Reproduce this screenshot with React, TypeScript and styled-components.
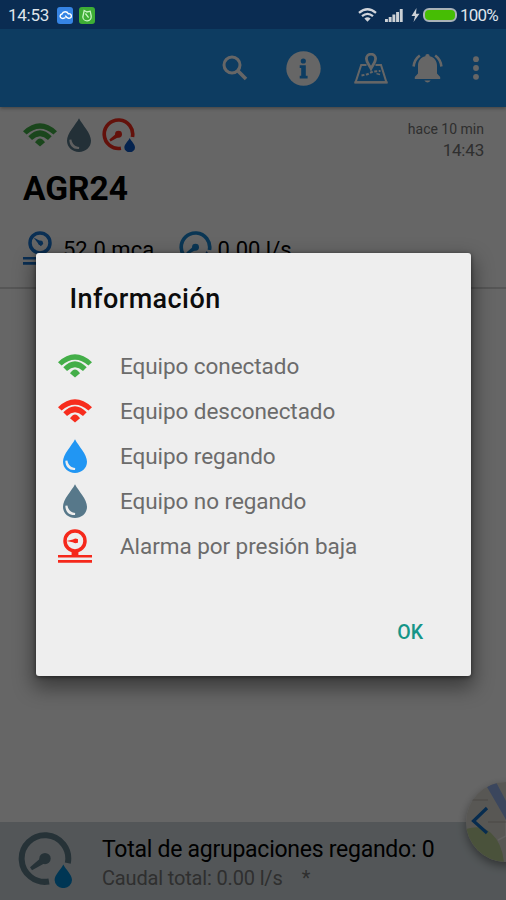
import React from "react";
import styled, { createGlobalStyle } from "styled-components";

const GlobalStyle = createGlobalStyle`
  * { box-sizing: border-box; }
  body { margin: 0; background: #666; font-family: Roboto, sans-serif; }
  svg { display: block; flex: none; }
`;

const Screen = styled.div`
  position: relative;
  display: flex;
  flex-direction: column;
  width: 506px;
  height: 900px;
  overflow: hidden;
  background: #fff;
`;

const StatusBar = styled.header`
  position: relative;
  z-index: 2;
  flex: none;
  display: flex;
  align-items: center;
  height: 29px;
  padding: 1px 8px 0;
  background: #0a2c52;
  color: #dfe4ea;
  font-size: 17px;
  line-height: 28px;
`;

const Clock = styled.span`
  width: 49px;
  letter-spacing: -0.25px;
`;

const Badge = styled.span<{ $color: string }>`
  display: flex;
  align-items: center;
  justify-content: center;
  width: 16px;
  height: 17px;
  margin-right: 6px;
  border-radius: 3px;
  background: ${(p) => p.$color};
`;

const StatusRight = styled.div`
  display: flex;
  align-items: center;
  margin-left: auto;
`;

const Charge = styled.span`
  width: 34px;
  height: 14px;
  margin: 0 3px 0 3px;
  border: 2px solid #a9b2b8;
  border-radius: 6px;
  background: #46bd04;
`;

const Percent = styled.span`
  width: 38px;
  letter-spacing: -0.8px;
`;

const Toolbar = styled.nav`
  flex: none;
  display: flex;
  align-items: center;
  justify-content: flex-end;
  height: 78px;
  padding-right: 26px;
  background: #2196f3;
  color: #fff;
  box-shadow: 0 1px 4px rgba(0, 0, 0, 0.4);
`;

const Action = styled.span<{ $gap: number }>`
  margin-left: ${(p) => p.$gap}px;
`;

const Card = styled.section`
  flex: none;
  display: flex;
  justify-content: space-between;
  height: 182px;
  padding: 11px 22px 0 23px;
  border-bottom: 2px solid #d6d6d6;
`;

const Badges = styled.div`
  display: flex;
  align-items: flex-start;
  height: 36px;
`;

const Name = styled.h1`
  margin: 15px 0 0;
  font-size: 33.5px;
  line-height: 40px;
  font-weight: 700;
`;

const Readings = styled.div`
  display: flex;
  align-items: flex-start;
  margin-top: 22px;
  font-size: 22px;
  line-height: 37px;
`;

const Reading = styled.span<{ $width: number }>`
  width: ${(p) => p.$width}px;
  padding-left: 6px;
  white-space: nowrap;
`;

const Times = styled.div`
  color: #757575;
  text-align: right;
  font-size: 14px;
  line-height: 22px;
`;

const Hour = styled.div`
  font-size: 17px;
  line-height: 21px;
  letter-spacing: -0.2px;
`;

const Summary = styled.footer`
  flex: none;
  display: flex;
  height: 78px;
  margin-top: auto;
  padding: 10px 18px;
  background: #cfd8dc;
`;

const SummaryText = styled.div`
  padding: 4px 0 0 30px;
  white-space: nowrap;
`;

const Total = styled.div`
  font-size: 23px;
  line-height: 27px;
  letter-spacing: -0.26px;
`;

const Flow = styled.div`
  margin-top: 2px;
  color: #757575;
  font-size: 20px;
  line-height: 26px;
  letter-spacing: -0.16px;
  white-space: pre;
`;

const MapHandle = styled.div`
  position: absolute;
  top: 782px;
  left: 466px;
  width: 80px;
  height: 80px;
  overflow: hidden;
  border-radius: 50%;
  box-shadow: 0 4px 10px rgba(0, 0, 0, 0.4);
`;

const Scrim = styled.div`
  position: absolute;
  inset: 0;
  z-index: 1;
  padding: 253px 35px 0 36px;
  background: rgba(0, 0, 0, 0.6);
`;

const Dialog = styled.div`
  display: flex;
  flex-direction: column;
  height: 423px;
  padding: 29px 48px 0 22px;
  border-radius: 3px;
  background: #eee;
  box-shadow: 0 9px 20px 3px rgba(0, 0, 0, 0.42), 0 1px 4px rgba(0, 0, 0, 0.5);
`;

const Title = styled.h2`
  margin: 0 0 27px 11.5px;
  font-size: 27px;
  line-height: 34px;
  font-weight: 500;
  letter-spacing: 0.42px;
  color: #0c0c0c;
`;

const Row = styled.div`
  display: flex;
  align-items: center;
  height: 45px;
  color: #6b6b6b;
  font-size: 22.5px;
`;

const Label = styled.span`
  margin-left: 28px;
  white-space: nowrap;
  letter-spacing: -0.06px;
`;

const Confirm = styled.button`
  align-self: flex-end;
  margin: 52px 0 0;
  padding: 0;
  border: 0;
  background: none;
  color: #159588;
  font: 500 19.5px/25px Roboto, sans-serif;
`;

const Wifi = ({ color }: { color: string }) => (
  <svg width="34" height="34" viewBox="0 0 34 34" fill={color}>
    <path d="M0 13.2Q17 -2.6 34 13.2L30.4 16.6Q17 4.8 3.6 16.6Z" />
    <path d="M5.3 18.3Q17 6.3 28.7 18.3L25 21.9Q17 14.6 9 21.9Z" />
    <path d="M12 24.2Q17 16.6 22 24.2L17 28.6Z" />
  </svg>
);

const Drop = ({ color }: { color: string }) => (
  <svg width="34" height="34" viewBox="0 0 34 34">
    <path d="M17 .3C20.5 7.2 29 15.2 29 22.8C29 29.2 23.8 34 17 34S5 29.2 5 22.8C5 15.2 13.5 7.2 17 .3Z" fill={color} />
    <path d="M7.3 21.8C7.5 28 11.4 31.6 17 31L17.2 28.9C13 28.6 10.2 26 9.4 21.4Z" fill="#eee" />
  </svg>
);

/* Flow gauge with a water drop over its open lower-right corner. */
const Dial = ({ size, color, drop }: { size: number; color: string; drop: string }) => (
  <svg width={size} height={size * 1.04} viewBox="0 0 54 56">
    <path d="M31 49.4A23.3 23.3 0 1 1 49.8 31" fill="none" stroke={color} strokeWidth="6" />
    <path d="M12 35.2L14 38.2L28 30.5L24.5 24.5Z" fill={color} />
    <circle cx="27" cy="26.5" r="5.7" fill={color} />
    <path d="M45.3 32.5C48 38 54 42.5 54 48A8.7 8 0 0 1 36.6 48C36.6 42.5 42.8 38 45.3 32.5Z" fill={drop} />
  </svg>
);

const Manometer = ({ color, tilt = 0 }: { color: string; tilt?: number }) => (
  <svg width="34" height="34" viewBox="0 0 34 34">
    <circle cx="17" cy="11.9" r="10" fill="none" stroke={color} strokeWidth="3.5" />
    <path d="M8.6 11.9L17 10H19.8V13.8H17Z" fill={color} transform={`rotate(${tilt} 17 11.9)`} />
    <circle cx="17.6" cy="11.9" r="2.4" fill={color} />
    <path d="M13.6 22H20.4V27H13.6ZM0 26H34V28.6H0ZM0 31.1H34V33.7H0Z" fill={color} />
  </svg>
);

const SearchIcon = () => (
  <svg width="26" height="26" viewBox="0 0 26 26" fill="none" stroke="currentColor">
    <circle cx="10" cy="10" r="8" strokeWidth="3" />
    <path d="M15.8 15.8L24 24" strokeWidth="3.6" />
  </svg>
);

const InfoIcon = () => (
  <svg width="35" height="35" viewBox="0 0 35 35">
    <circle cx="17.5" cy="17.5" r="17.2" fill="currentColor" />
    <g fill="#2196f3">
      <circle cx="17.3" cy="10" r="2.6" />
      <path d="M13.7 14.3H19.8V24.8H21.6V27.4H13.7V24.8H15.2V16.9H13.7Z" />
    </g>
  </svg>
);

const MapIcon = () => (
  <svg width="34" height="31" viewBox="0 0 34 31" fill="none" stroke="currentColor" strokeWidth="2">
    <path d="M12.5 12H7.2L1.6 29.3H32.4L27 12H21.5" />
    <path d="M.5 29.4H33.5" strokeWidth="2.4" />
    <path d="M17 15.5C15.5 12 12.4 9.4 12.4 5.8A4.6 4.6 0 0 1 21.6 5.8C21.6 9.4 18.5 12 17 15.5Z" strokeWidth="2.8" />
    <path d="M7.5 22.5L13.5 21.2L19 18.5L26.5 18" strokeDasharray="3 1.5" />
    <path d="M22.5 20.6L26 21.5" strokeWidth="1.3" />
  </svg>
);

const BellIcon = () => (
  <svg width="32" height="31" viewBox="0 0 32 31" fill="currentColor">
    <path d="M15.5 1A2.2 2.2 0 0 1 17.7 3.2C22.5 4.3 25 8 25 12.8V20.5L28.2 24V26H2.8V24L6 20.5V12.8C6 8 8.5 4.3 13.3 3.2A2.2 2.2 0 0 1 15.5 1ZM12.3 27.4H18.7Q15.5 31.5 12.3 27.4Z" />
    <path d="M7.8 2.5Q2.4 6.4 1.6 13.5M23.2 2.5Q28.6 6.4 29.4 13.5" fill="none" stroke="currentColor" strokeWidth="2.6" />
  </svg>
);

const MoreIcon = () => (
  <svg width="8" height="24" viewBox="0 0 8 24" fill="currentColor">
    <circle cx="4" cy="3.2" r="2.9" />
    <circle cx="4" cy="12" r="2.9" />
    <circle cx="4" cy="20.8" r="2.9" />
  </svg>
);

const CloudIcon = () => (
  <svg width="13" height="9" viewBox="0 0 13 9" fill="none" stroke="#fff" strokeWidth="1.4">
    <path d="M6.5 6.5Q4.5 8 2.5 7.2A2.2 2.2 0 0 1 3 3A3.4 3.4 0 0 1 9.3 2.8A2.3 2.3 0 1 1 9.5 7.2Q7.7 7 6.3 4.6" />
  </svg>
);

const TagIcon = () => (
  <svg width="12" height="13" viewBox="0 0 12 13" fill="none" stroke="#c8f5c5" strokeWidth="1.3">
    <path d="M3.2 1.5L6 3L9.2 2.2L10.2 7.2A4.2 4.2 0 0 1 1.8 8Z" />
    <path d="M4.4 4.5L7.6 8.7" />
  </svg>
);

const StatusWifi = () => (
  <svg width="19" height="14" viewBox="0 0 19 14" fill="none" stroke="#d1d5db" strokeWidth="2.3">
    <path d="M1 4.8Q9.5 -2.2 18 4.8M4 8.2Q9.5 3.6 15 8.2" />
    <path d="M6.4 10.5Q9.5 8 12.6 10.5L9.5 13.7Z" fill="#d1d5db" stroke="none" />
  </svg>
);

const Signal = () => (
  <svg width="18" height="13" viewBox="0 0 18 13" fill="#ccd1d6">
    <path d="M0 10H2.9V13H0ZM3.7 8H6.6V13H3.7ZM7.4 5.5H10.3V13H7.4ZM11.1 3H14V13H11.1ZM14.8 0H17.7V13H14.8Z" />
  </svg>
);

const Bolt = () => (
  <svg width="9" height="14" viewBox="0 0 9 14" fill="#ccd1d6">
    <path d="M5.5 0L.5 8H4L2.5 14L8.5 5.7H5Z" />
  </svg>
);

const MapArt = () => (
  <svg width="80" height="80" viewBox="0 0 80 80">
    <rect width="80" height="80" fill="#dcd9d2" />
    <path d="M0 47Q16 42 25 51Q36 61 38 80H0Z" fill="#b9cc93" />
    <path d="M22 0L40 31V54L32 58" fill="none" stroke="#f4f2ee" strokeWidth="1.5" />
    <path d="M21 5L30 0L48 34V58L39 36Z" fill="#94afe8" />
    <path d="M6 18H22M22 40H40" stroke="#b9b4ac" strokeWidth="1.2" />
    <path d="M21 26L7.5 39L21 51" fill="none" stroke="#126fc5" strokeWidth="3.2" />
  </svg>
);

const Legend: { icon: React.ReactNode; text: string }[] = [
  { icon: <Wifi color="#43ae48" />, text: "Equipo conectado" },
  { icon: <Wifi color="#f72c1d" />, text: "Equipo desconectado" },
  { icon: <Drop color="#2196f3" />, text: "Equipo regando" },
  { icon: <Drop color="#57788a" />, text: "Equipo no regando" },
  { icon: <Manometer color="#f5281b" />, text: "Alarma por presión baja" },
];

export default function App() {
  return (
    <>
      <GlobalStyle />
      <Screen>
        <StatusBar>
          <Clock>14:53</Clock>
          <Badge $color="#3684e4"><CloudIcon /></Badge>
          <Badge $color="#3eae35"><TagIcon /></Badge>
          <StatusRight>
            <StatusWifi />
            <Action $gap={8}><Signal /></Action>
            <Action $gap={8}><Bolt /></Action>
            <Charge />
            <Percent>100%</Percent>
          </StatusRight>
        </StatusBar>
        <Toolbar>
          <SearchIcon />
          <Action $gap={38}><InfoIcon /></Action>
          <Action $gap={33}><MapIcon /></Action>
          <Action $gap={24}><BellIcon /></Action>
          <Action $gap={28}><MoreIcon /></Action>
        </Toolbar>
        <Card>
          <div>
            <Badges>
              <Wifi color="#43ae48" />
              <Action $gap={5}><Drop color="#57788a" /></Action>
              <Action $gap={6}><Dial size={33} color="#f72c1d" drop="#0d57c4" /></Action>
            </Badges>
            <Name>AGR24</Name>
            <Readings>
              <Manometer color="#1976d2" tilt={40} />
              <Reading $width={121.5}>52.0 mca</Reading>
              <Dial size={33} color="#1b87d2" drop="#1565c0" />
              <Reading $width={100}>0.00 l/s</Reading>
            </Readings>
          </div>
          <Times>
            hace 10 min
            <Hour>14:43</Hour>
          </Times>
        </Card>
        <Summary>
          <Dial size={54} color="#607d8b" drop="#0288d1" />
          <SummaryText>
            <Total>Total de agrupaciones regando: 0</Total>
            <Flow>{"Caudal total: 0.00 l/s    *"}</Flow>
          </SummaryText>
        </Summary>
        <MapHandle><MapArt /></MapHandle>
        <Scrim>
          <Dialog role="dialog">
            <Title>Información</Title>
            {Legend.map((item) => (
              <Row key={item.text}>
                {item.icon}
                <Label>{item.text}</Label>
              </Row>
            ))}
            <Confirm>OK</Confirm>
          </Dialog>
        </Scrim>
      </Screen>
    </>
  );
}
